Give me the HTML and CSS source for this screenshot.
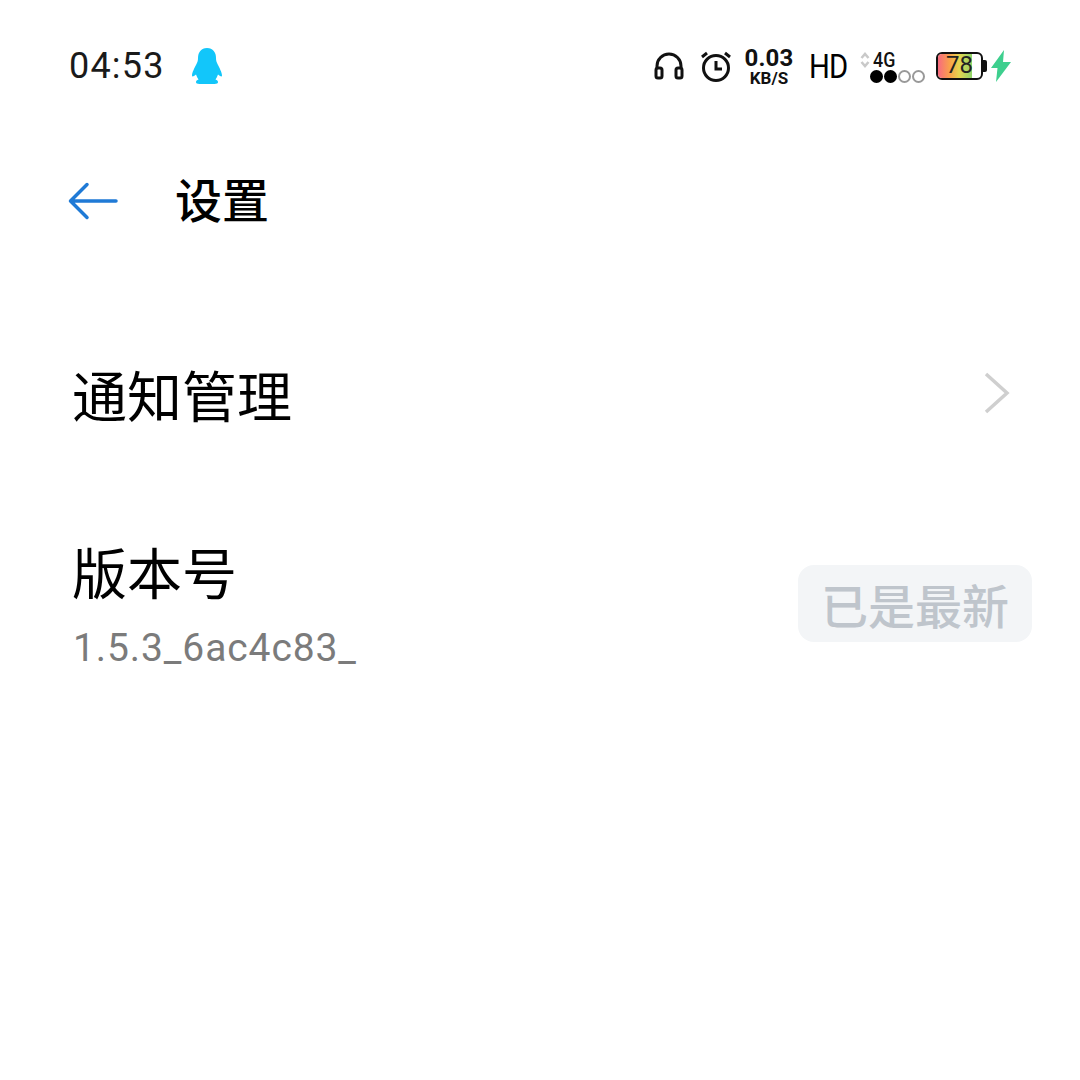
FILE: index.html
```html
<!DOCTYPE html>
<html lang="zh">
<head>
<meta charset="utf-8">
<title>设置</title>
<link rel="stylesheet" href="styles.css">
</head>
<body>
<div class="screen">
  <header class="status">
    <div class="status-left">
      <span class="time">04:53</span>
      <svg class="qq" viewBox="1 0 30 36" width="30" height="36"><path fill="#12c6fa" d="M16 0C10 0 7 4.500 7 10c0 2.500-.5 4-1.500 6C3.500 20 1 24.500 1 27.500c0 .9.600 1.200 2 .5l2-1.500c.7 2 1.500 3.500 2.500 5-1.500.6-2.500 1.500-2.500 2.600 0 1.400 1.200 1.900 3.500 1.900h15c2.300 0 3.500-.5 3.500-1.900 0-1.100-1-2-2.500-2.600 1-1.500 1.800-3 2.500-5l2 1.500c1.400.7 2 .4 2-.5 0-3-2.500-7.500-4.500-11.500-1-2-1.500-3.500-1.500-6C25 4.500 22 0 16 0z"/></svg>
    </div>
    <div class="status-right">
      <svg class="headset" viewBox="0 0 30 28" width="30" height="28"><path d="M3 19v-5a12 12 0 0 1 24 0v5" fill="none" stroke="#111" stroke-width="3"/><rect x="2" y="16" width="6" height="10" rx="2" fill="#fff" stroke="#111" stroke-width="3"/><rect x="22" y="16" width="6" height="10" rx="2" fill="#fff" stroke="#111" stroke-width="3"/></svg>
      <svg class="alarm" viewBox="0 0 32 32" width="32" height="32"><circle cx="16" cy="18" r="12.500" fill="none" stroke="#111" stroke-width="3"/><path d="M16 11v8h6M2 7l5-4M30 7l-5-4" fill="none" stroke="#111" stroke-width="3"/></svg>
      <div class="speed"><span class="speed-num">0.03</span><span class="speed-unit">KB/S</span></div>
      <span class="hd">HD</span>
      <div class="net">
        <div class="net-top">
          <svg class="updown" viewBox="0 0 10 16" width="10" height="16"><path d="M1.500 6 5 2l3.500 4M1.500 10 5 14l3.500-4" fill="none" stroke="#c9c9c9" stroke-width="2.500"/></svg>
          <span class="net-label">4G</span>
        </div>
        <div class="dots"><i class="dot on"></i><i class="dot on"></i><i class="dot"></i><i class="dot"></i></div>
      </div>
      <div class="battery">
        <div class="battery-body"><div class="battery-fill"></div><span class="battery-num">78</span></div>
        <div class="battery-cap"></div>
      </div>
      <svg class="bolt" viewBox="0 0 20 32" width="20" height="32"><path fill="#3ecf8e" d="M13 0 0 18h6.500L5 32 20 12h-8z"/></svg>
    </div>
  </header>

  <nav class="titlebar">
    <svg class="back" viewBox="0 0 50 38" width="50" height="38"><path d="M48 19H3M19 2.500 2.500 19 19 35.500" fill="none" stroke="#1f7ad6" stroke-width="3.500" stroke-linecap="round" stroke-linejoin="round"/></svg>
    <h1 class="title">设置</h1>
  </nav>

  <section class="row row-notify">
    <span class="row-label">通知管理</span>
    <svg class="chevron" viewBox="0 0 26 42" width="26" height="42"><path d="M2 2l21 19L2 40" fill="none" stroke="#cfcfcf" stroke-width="3.500"/></svg>
  </section>

  <section class="row row-version">
    <div class="version-text">
      <span class="row-label">版本号</span>
      <span class="version">1.5.3_6ac4c83_</span>
    </div>
    <button class="update">已是最新</button>
  </section>
</div>
</body>
</html>
```
FILE: styles.css
```css
* { box-sizing: border-box; }
html, body { margin: 0; padding: 0; background: #fff; }
body { font-family: "Noto Sans CJK SC", "Roboto", sans-serif; color: #000; }
.screen { width: 1080px; height: 1080px; overflow: hidden; display: flex; flex-direction: column; }

.status { display: flex; justify-content: space-between; align-items: center; height: 36px; margin-top: 48px; padding: 0 69px 0 69px; }
.status-left { display: flex; align-items: center; gap: 27px; }
.time { font-family: "Roboto", sans-serif; font-size: 36px; font-weight: 400; letter-spacing: 1.2px; line-height: 36px; color: #1a1a1a; }
.status-right { display: flex; align-items: center; }
.headset { margin-right: 16px; }
.alarm { margin-right: 13px; }
.speed { display: flex; flex-direction: column; align-items: center; width: 48px; margin-right: 16px; font-family: "Roboto", sans-serif; font-weight: 700; color: #111; }
.speed-num { font-size: 24px; line-height: 22px; letter-spacing: .2px; }
.speed-unit { font-size: 17px; line-height: 16px; margin-top: 1px; }
.hd { font-family: "Roboto", sans-serif; font-size: 34px; line-height: 36px; color: #000; letter-spacing: -1px; width: 38px; margin-right: 13px; transform: scaleX(.86); transform-origin: left; }
.net { display: flex; flex-direction: column; width: 66px; margin-right: 10px; }
.net-top { display: flex; align-items: center; gap: 3px; height: 20px; }
.net-label { font-family: "Roboto", sans-serif; font-size: 21px; line-height: 20px; font-weight: 500; color: #111; transform: scaleX(.85); transform-origin: left; }
.dots { display: flex; gap: 1px; padding-left: 10px; }
.dot { width: 13px; height: 13px; border-radius: 50%; border: 2px solid #999; }
.dot.on { background: #000; border-color: #000; }
.battery { display: flex; align-items: center; margin-right: 4px; }
.battery-body { position: relative; width: 47px; height: 28px; border: 2.500px solid #111; border-radius: 6px; overflow: hidden; background: #fff; }
.battery-fill { width: 78%; height: 100%; background: linear-gradient(90deg, #f76a80, #f9a24a 35%, #e6d64f 62%, #8fd46a); }
.battery-num { position: absolute; inset: 0; text-align: center; font-family: "Roboto", sans-serif; font-size: 24px; font-weight: 400; line-height: 23px; color: #222; }
.battery-cap { width: 4px; height: 12px; background: #111; border-radius: 0 2px 2px 0; }

.titlebar { display: flex; align-items: center; height: 50px; margin-top: 92px; padding-left: 68px; }
.back { margin-right: 58px; }
.title { margin: 0 0 0 -1px; padding-bottom: 6px; font-size: 47px; font-weight: 500; line-height: 50px; color: #000; }

.row { display: flex; justify-content: space-between; align-items: center; }
.row-notify { margin-top: 137px; height: 60px; padding: 0 70px 0 72px; }
.row-label { font-size: 55px; line-height: 60px; font-weight: 400; color: #000; }
.row-version { margin-top: 117px; padding: 0 48px 0 72px; align-items: flex-start; }
.version-text { display: flex; flex-direction: column; }
.version { font-family: "Roboto", sans-serif; font-size: 39px; line-height: 44px; margin-top: 26px; margin-left: 1px; letter-spacing: .9px; color: #7b7b7b; }
.update { width: 234px; height: 77px; margin-top: 25px; border: 0; border-radius: 16px; background: #f3f5f7; color: #bfc5cc; font-family: inherit; font-size: 47px; font-weight: 500; padding: 0; }
```
